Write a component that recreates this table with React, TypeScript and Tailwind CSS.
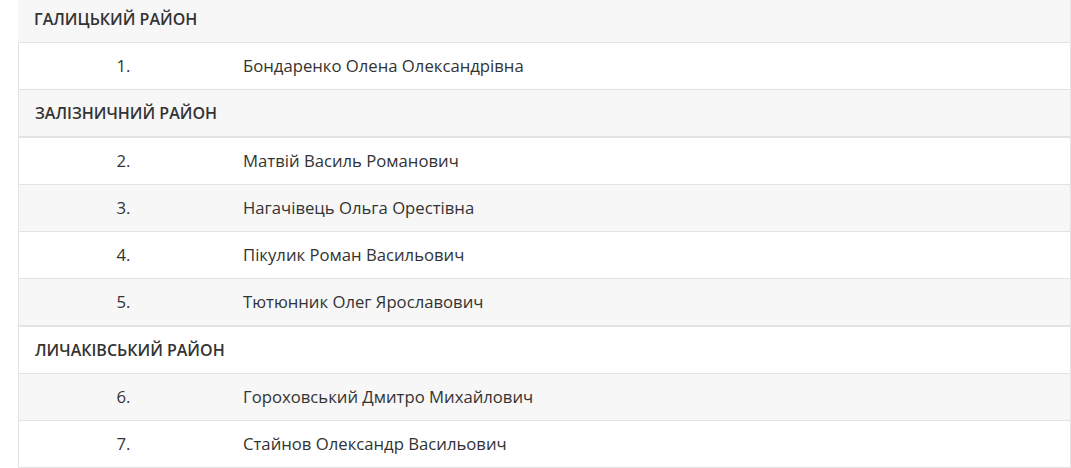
const groups = [
  { district: 'ГАЛИЦЬКИЙ РАЙОН', people: [{ n: 1, name: 'Бондаренко Олена Олександрівна' }] },
  {
    district: 'ЗАЛІЗНИЧНИЙ РАЙОН',
    people: [
      { n: 2, name: 'Матвій Василь Романович' },
      { n: 3, name: 'Нагачівець Ольга Орестівна' },
      { n: 4, name: 'Пікулик Роман Васильович' },
      { n: 5, name: 'Тютюнник Олег Ярославович' },
    ],
  },
  {
    district: 'ЛИЧАКІВСЬКИЙ РАЙОН',
    people: [
      { n: 6, name: 'Гороховський Дмитро Михайлович' },
      { n: 7, name: 'Стайнов Олександр Васильович' },
    ],
  },
];

const headerCls = [
  'h-[43px] border-b pb-[5px]',
  'h-[48px] border-b-2 border-l',
  'h-[48px] border-t border-b border-l',
];

export default function App() {
  let idx = 0;
  const rows: JSX.Element[] = [];
  groups.forEach((g, gi) => {
    const striped = idx % 2 === 0;
    idx++;
    rows.push(
      <div
        key={'g' + gi}
        className={`flex items-center pl-4 text-[16px] font-semibold border-r border-[#e3e3e3] ${headerCls[gi]} ${
          striped ? 'bg-[#f7f7f7]' : 'bg-white'
        }`}
      >
        {g.district}
      </div>
    );
    g.people.forEach((p) => {
      const s = idx % 2 === 0;
      idx++;
      rows.push(
        <div
          key={'p' + p.n}
          className={`flex h-[47px] items-center border-x border-b border-[#e3e3e3] ${s ? 'bg-[#f7f7f7]' : 'bg-white'}`}
        >
          <div className="w-[209px] text-center">{p.n}.</div>
          <div className="pl-[15px]">{p.name}</div>
        </div>
      );
    });
  });

  return (
    <div className="h-[468px] overflow-hidden bg-white pl-[18px] pr-0 text-[16.7px] text-[#333] font-['Open_Sans','Noto_Sans',sans-serif]">
      <div className="flex flex-col">{rows}</div>
    </div>
  );
}
